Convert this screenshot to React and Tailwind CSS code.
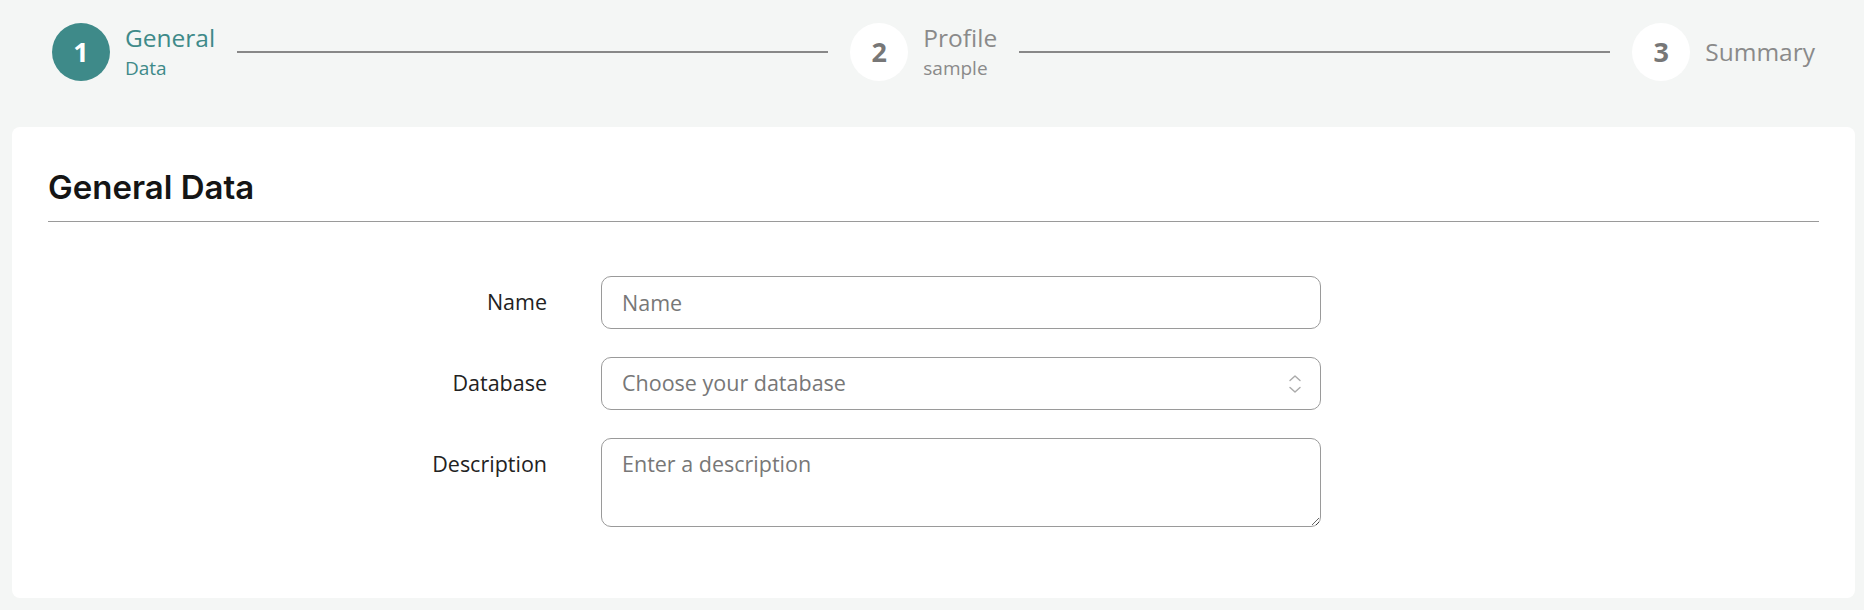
import React from 'react';

const steps = [
  { n: 1, title: 'General', sub: 'Data', active: true },
  { n: 2, title: 'Profile', sub: 'sample' },
  { n: 3, title: 'Summary' },
];

function Step({ step }) {
  return (
    <div className="flex items-center gap-[15px] shrink-0">
      <div
        className={`w-[58px] h-[58px] rounded-full flex items-center justify-center text-[27px] font-bold ${
          step.active ? 'bg-[#3e8a89] text-white' : 'bg-white text-[#777]'
        }`}
      >
        {step.n}
      </div>
      <div className={`flex flex-col ${step.active ? 'text-[#3e8a89]' : 'text-[#8a8a8a]'}`}>
        <span className={`text-[24.5px] ${step.sub ? 'leading-[32px]' : 'leading-[34px]'}`}>{step.title}</span>
        {step.sub && <span className="text-[19px] leading-[28px]">{step.sub}</span>}
      </div>
    </div>
  );
}

function Stepper() {
  return (
    <div className="flex items-center pl-[52px] pr-[49px] pt-[23px] pb-[46px] h-[127px]">
      {steps.map((s, i) => (
        <React.Fragment key={s.n}>
          <Step step={s} />
          {i < steps.length - 1 && <div className="flex-1 h-[2.5px] bg-[#888] mx-[22px]" />}
        </React.Fragment>
      ))}
    </div>
  );
}

function Chevrons() {
  return (
    <svg width="14" height="20" viewBox="0 0 14 20" fill="none" stroke="#aaa" strokeWidth="1.4" strokeLinecap="round" strokeLinejoin="round">
      <path d="M2 6.5 7 2l5 4.5" />
      <path d="M2 13.5 7 18l5-4.5" />
    </svg>
  );
}

export default function App() {
  return (
    <div
      className="min-h-[610px] bg-[#f4f6f5] pb-[12px]"
      style={{ fontFamily: '"Open Sans", Lato, sans-serif' }}
    >
      <Stepper />

      <div className="ml-[12px] mr-[9px] bg-white rounded-[8px] px-[36px] pt-[40px] pb-[71px]">
        <h2
          className="text-[33px] leading-[40px] font-semibold text-[#151515]"
          style={{ fontFamily: 'Inter, sans-serif' }}
        >
          General Data
        </h2>
        <div className="mt-[14px] border-t border-[#9a9a9a]" />

        <div className="mt-[54px] flex flex-col gap-[28px] text-[21.5px] text-[#222]">
          {/* Name */}
          <div className="flex items-center gap-[54px]">
            <label className="w-[499px] text-right">Name</label>
            <input
              placeholder="Name"
              className="w-[720px] h-[53px] rounded-[10px] border border-[#9a9a9a] px-[20px] outline-none placeholder:text-[#777] text-[#222]"
            />
          </div>

          {/* Database */}
          <div className="flex items-center gap-[54px]">
            <label className="w-[499px] text-right">Database</label>
            <div className="relative w-[720px]">
              <select
                defaultValue=""
                className="w-full h-[53px] appearance-none rounded-[10px] border border-[#9a9a9a] bg-white px-[20px] outline-none text-[#777]"
              >
                <option value="" disabled>Choose your database</option>
              </select>
              <div className="absolute right-[19px] top-1/2 -translate-y-1/2 pointer-events-none">
                <Chevrons />
              </div>
            </div>
          </div>

          {/* Description */}
          <div className="flex items-start gap-[54px]">
            <label className="w-[499px] text-right pt-[11px] leading-[30px]">Description</label>
            <textarea
              placeholder="Enter a description"
              className="w-[720px] h-[89px] rounded-[10px] border border-[#9a9a9a] px-[20px] pt-[10px] leading-[30px] outline-none placeholder:text-[#777] text-[#222] block"
            />
          </div>
        </div>
      </div>
    </div>
  );
}
